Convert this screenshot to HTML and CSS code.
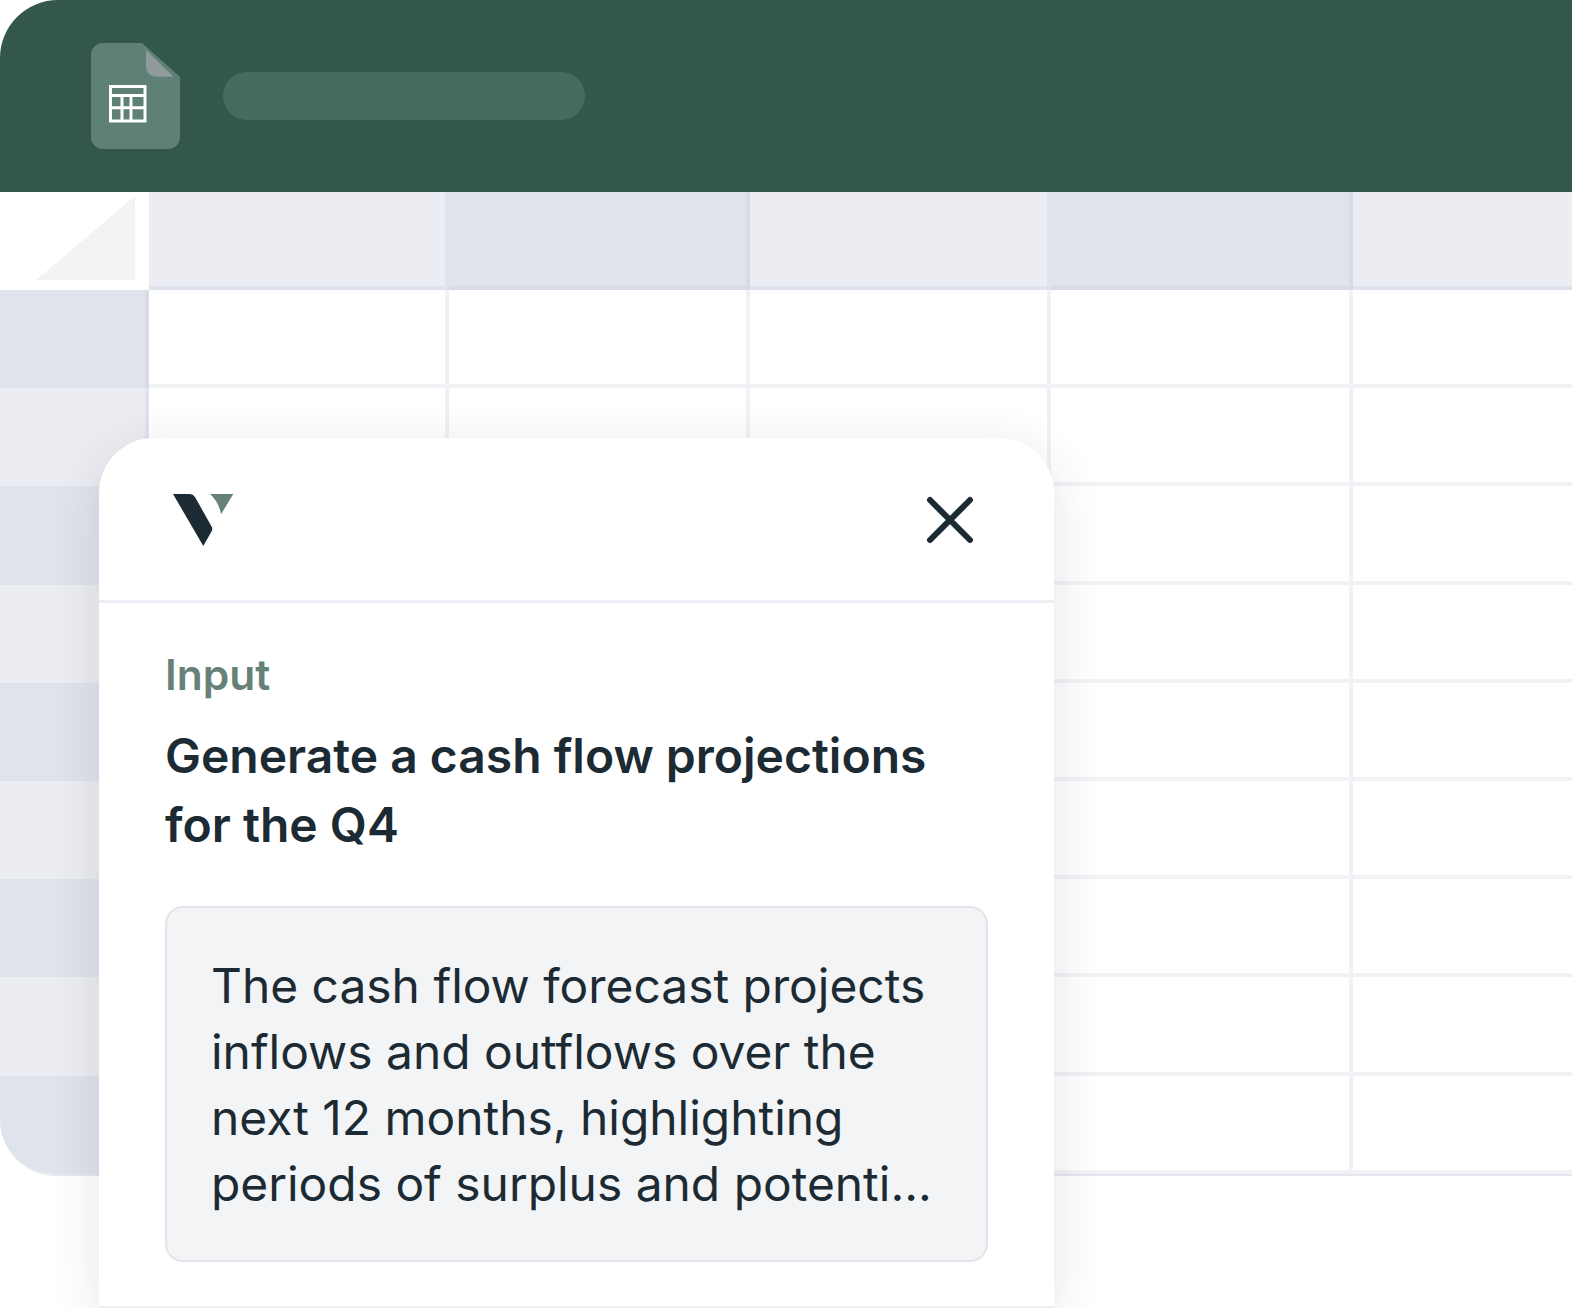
FILE: index.html
```html
<!DOCTYPE html>
<html lang="en">
<head>
    <meta charset="UTF-8">
    <meta name="viewport" content="width=device-width, initial-scale=1.0">
    <title>Cash flow projections</title>
    <link rel="stylesheet" href="styles.css">
</head>
<body>
    <div class="sheet">
        <div class="sheet-header">
            <svg class="file-icon" width="90" height="106" viewBox="0 0 90 106">
                <path d="M12 0H51L89 34V94A12 12 0 0 1 77 106H12A12 12 0 0 1 0 94V12A12 12 0 0 1 12 0Z" fill="#5f8076"/>
                <path d="M55 7L82.500 33.700H66Q55 33 55 23Z" fill="#8f9b9c"/>
                <path d="M19.500 43.500H54V78H19.500ZM19.500 52.500H54M19.500 64.800H54M31 52.500V78M40 52.500V78" fill="none" stroke="#fff" stroke-width="3"/>
            </svg>
            <div class="title-pill"></div>
        </div>

        <div class="grid">
            <div class="corner"><div class="corner-mark"></div></div>
            <div class="col-head"></div><div class="col-head dark"></div><div class="col-head"></div><div class="col-head dark"></div><div class="col-head last"></div>

            <div class="row-head dark"></div><div class="cell"></div><div class="cell"></div><div class="cell"></div><div class="cell"></div><div class="cell"></div>
            <div class="row-head"></div><div class="cell"></div><div class="cell"></div><div class="cell"></div><div class="cell"></div><div class="cell"></div>
            <div class="row-head dark"></div><div class="cell"></div><div class="cell"></div><div class="cell"></div><div class="cell"></div><div class="cell"></div>
            <div class="row-head"></div><div class="cell"></div><div class="cell"></div><div class="cell"></div><div class="cell"></div><div class="cell"></div>
            <div class="row-head dark"></div><div class="cell"></div><div class="cell"></div><div class="cell"></div><div class="cell"></div><div class="cell"></div>
            <div class="row-head"></div><div class="cell"></div><div class="cell"></div><div class="cell"></div><div class="cell"></div><div class="cell"></div>
            <div class="row-head dark"></div><div class="cell"></div><div class="cell"></div><div class="cell"></div><div class="cell"></div><div class="cell"></div>
            <div class="row-head"></div><div class="cell"></div><div class="cell"></div><div class="cell"></div><div class="cell"></div><div class="cell"></div>
            <div class="row-head dark"></div><div class="cell"></div><div class="cell"></div><div class="cell"></div><div class="cell"></div><div class="cell"></div>
        </div>
    </div>

    <div class="panel">
        <div class="panel-top">
            <svg class="logo" width="62" height="54" viewBox="0 0 62 54">
                <path d="M0 0H17Q20 0 22 3L38.700 32.700Q40 35 38.500 37.500L30.300 52Z" fill="#1c2b33"/>
                <path d="M37 0H60.300L48 20.300Q46 8 37 0Z" fill="#668278"/>
            </svg>
            <svg class="close-icon" width="50" height="50" viewBox="0 0 50 50">
                <path d="M5 5L45 45M45 5L5 45" fill="none" stroke="#1c2b33" stroke-width="6" stroke-linecap="round"/>
            </svg>
        </div>
        <div class="panel-body">
            <div class="label">Input</div>
            <h2 class="prompt">Generate a cash flow projections for the Q4</h2>
            <div class="answer">The cash flow forecast projects inflows and outflows over the next 12 months, highlighting periods of surplus and potenti...</div>
        </div>
    </div>
</body>
</html>
```

FILE: styles.css
```css
body {
    margin: 0;
    height: 1308px;
    overflow: hidden;
    position: relative;
    background: #fff;
    font-family: Inter, "Liberation Sans", sans-serif;
    color: #1c2b33;
}

.sheet {
    overflow: hidden;
    border-radius: 58px 0 0 56px;
    border-bottom: 2px solid #e6e7ef;
}
.sheet-header {
    height: 192px;
    box-sizing: border-box;
    padding-left: 91px;
    display: flex;
    align-items: center;
    gap: 42px;
    background: #33574a;
}
.file-icon {
    flex: none;
}
.title-pill {
    width: 362px;
    height: 48px;
    border-radius: 24px;
    background: #456c5e;
}

.grid {
    display: grid;
    grid-template-columns: 149px 300px 301px 301px 302px 1fr;
    grid-template-rows: 98px repeat(9, 98.2px);
}
.corner {
    padding: 4px 14px 10px 36px;
    display: flex;
}
.corner-mark {
    flex: 1;
    background: #f3f3f5;
    clip-path: polygon(100% 0, 100% 100%, 0 100%);
}
.col-head {
    box-sizing: border-box;
    background: #ecedf2;
    border-right: 4px solid #dfe3ec;
    border-bottom: 4px solid #dfe3ec;
}
.col-head.dark {
    background: #dfe3ec;
    border-right-color: #d6dbe5;
    border-bottom-color: #d6dbe5;
}
.col-head.last {
    border-right: none;
}
.row-head {
    box-sizing: border-box;
    background: #ecedf2;
    border-right: 4px solid #dfe3ec;
}
.row-head.dark {
    background: #dfe3ec;
    border-right-color: #d6dbe5;
}
.cell {
    box-sizing: border-box;
    border-right: 4px solid #f1f2f6;
    border-bottom: 4px solid #f1f2f6;
}
.cell:nth-child(6n) {
    border-right: none;
}

.panel {
    position: absolute;
    left: 99px;
    top: 438px;
    width: 955px;
    height: 870px;
    box-sizing: border-box;
    background: #fff;
    border-radius: 55px 55px 0 0;
    border-bottom: 2px solid #eceef4;
    box-shadow: 0 10px 50px rgba(30, 40, 60, 0.12);
}
.panel-top {
    height: 165px;
    box-sizing: border-box;
    padding: 56px 79px 0 74px;
    display: flex;
    justify-content: space-between;
    align-items: flex-start;
    border-bottom: 3px solid #eceef3;
}
.close-icon {
    margin-top: 1px;
}
.panel-body {
    padding: 44px 66px 0 66px;
}
.label {
    font-size: 42.500px;
    line-height: 56px;
    font-weight: 600;
    color: #668278;
}
.prompt {
    margin: 18px 0 0;
    font-size: 48px;
    line-height: 69px;
    font-weight: 600;
}
.answer {
    margin-top: 47px;
    box-sizing: border-box;
    height: 356px;
    padding: 45px 40px 0 44px;
    background: #f3f4f6;
    border: 2.500px solid #e3e5ed;
    border-radius: 18px;
    font-size: 47.900px;
    line-height: 66px;
}
```
